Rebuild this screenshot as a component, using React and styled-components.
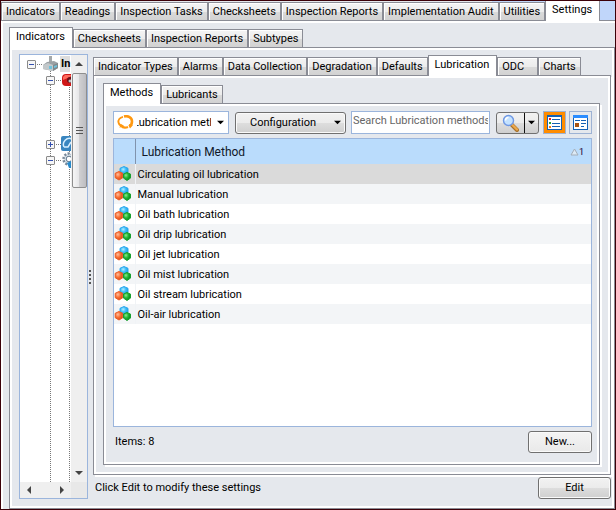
import React, { useState } from 'react';
import styled, { createGlobalStyle, css } from 'styled-components';

const GlobalStyle = createGlobalStyle`
  * {
    box-sizing: border-box;
  }
  body {
    margin: 0;
    font-family: Tahoma, Roboto, sans-serif;
    font-size: 11px;
    line-height: 16px;
    color: #000;
  }
  button, input, select {
    font: inherit;
    color: inherit;
    margin: 0;
  }
  svg {
    flex: none;
  }
`;

const Window = styled.div`
  display: flex;
  flex-direction: column;
  height: 100vh;
  background: #e5e8ed;
  border: 1px solid #3b0008;
  overflow: hidden;
`;

const TabStrip = styled.div`
  display: flex;
  align-items: flex-end;
  flex: none;
  height: ${(p) => (p.$main ? 19 : 21)}px;
  background: ${(p) => (p.$main ? 'linear-gradient(90deg, #e5e8ed 80%, #c0d6fa 80%)' : 'none')};
`;

const TabButton = styled.button`
  flex: none;
  height: 18px;
  min-width: 41px;
  padding: 0 4px;
  line-height: 16px;
  text-align: left;
  white-space: nowrap;
  border: 1px solid #8a8c95;
  border-bottom: none;
  background: linear-gradient(#f4f4f4 0%, #ececec 50%, #dadada 52%, #d2d2d2 100%);
  box-shadow: inset 1px 1px #fff;
  ${(p) => p.$active && css`
    height: 21px;
    margin-bottom: -1px;
    padding: 0 7px 3px 6px;
    background: #fff;
    position: relative;
  `}
`;

const Pane = styled.div`
  display: flex;
  flex: 1;
  flex-direction: ${(p) => (p.$row ? 'row' : 'column')};
  min-width: 0;
  min-height: 0;
  border: 1px solid #8a8c95;
  box-shadow: inset 0 0 0 2px #fff, 2px 2px #fff;
  padding: ${(p) => p.$pad || '9px'};
`;

const MainPane = styled(Pane)`
  border-width: 1px 0 0;
  box-shadow: inset 0 2px #fff, inset 2px 0 #fff;
`;

const TreePanel = styled.div`
  display: flex;
  flex-direction: column;
  flex: none;
  width: 69px;
  border: 1px solid #9bb5dc;
  background: #fff;
`;

const TreeTop = styled.div`
  display: flex;
  flex: 1;
  min-height: 0;
`;

const dots = 'repeating-linear-gradient(#777 0 1px, #fff 1px 2px)';

const TreeBody = styled.div`
  flex: 1;
  min-width: 0;
  padding-top: 1px;
  overflow: hidden;
  background: ${dots} 30px 14px / 1px 100% no-repeat, ${dots} 49px 30px / 1px 100% no-repeat;
`;

const TreeRow = styled.div`
  display: flex;
  align-items: center;
  height: 16px;
  margin-bottom: ${(p) => (p.$gap ? 48 : 0)}px;
  padding-left: ${(p) => (p.$depth ? 26 : 7)}px;
  font-weight: bold;
  white-space: nowrap;
`;

const Toggle = styled.button`
  display: flex;
  flex: none;
  width: 9px;
  height: 9px;
  padding: 0;
  border: 1px solid #8a8a8a;
  border-radius: 1px;
  background: #f6f6f6;
`;

const Branch = styled.span`
  flex: none;
  width: 6px;
  height: 1px;
  background: repeating-linear-gradient(90deg, #fff 0 1px, #777 1px 2px);
`;

const TreeLabel = styled.span`
  margin-left: 1px;
  padding-left: 1px;
  background: #ddd;
`;

const ScrollBar = styled.div`
  display: flex;
  flex: none;
  align-items: center;
  background: #efefef;
  ${(p) => (p.$horizontal
    ? css`height: 16px; width: 51px; justify-content: space-between; padding: 0 6px;`
    : css`width: 16px; flex-direction: column;`)}
`;

const ScrollRow = styled.div`
  flex: none;
  background: #e8e8e8;
`;

const ScrollArrow = styled.button`
  display: flex;
  flex: none;
  align-items: center;
  justify-content: center;
  width: ${(p) => (p.$small ? 6 : 16)}px;
  height: 18px;
  padding: 0;
  border: none;
  background: none;
`;

const Thumb = styled.div`
  display: flex;
  flex: none;
  align-items: center;
  justify-content: center;
  width: 15px;
  height: 27%;
  border: 1px solid #8e8e8e;
  border-radius: 2px;
  background: linear-gradient(90deg, #f6f6f6, #e6e6e8 45%, #cfcfd1 50%, #bdbdc1);
`;

const Track = styled.div`
  flex: 1;
`;

const Splitter = styled.div`
  display: flex;
  flex: none;
  align-items: center;
  justify-content: center;
  width: 5px;
`;

const Content = styled.div`
  display: flex;
  flex: 1;
  flex-direction: column;
  min-width: 0;
`;

const Footer = styled.div`
  display: flex;
  flex: none;
  align-items: center;
  justify-content: space-between;
  margin-top: ${(p) => p.$gap}px;
  padding-left: 2px;
`;

const Button = styled.button`
  display: flex;
  align-items: center;
  justify-content: center;
  gap: 18px;
  flex: none;
  width: ${(p) => p.$width}px;
  height: 22px;
  padding: 0 4px;
  border: 1px solid #707070;
  border-radius: 3px;
  background: linear-gradient(#f2f2f2 0%, #ebebeb 50%, #dddddd 51%, #cfcfcf 100%);
  box-shadow: inset 0 0 0 1px #fafafa;
`;

const MenuButton = styled(Button)`
  justify-content: flex-end;
`;

const PlainButton = styled(Button)`
  background: linear-gradient(#f4f4f4, #e9e9e9);
`;

const Toolbar = styled.div`
  display: flex;
  flex: none;
  align-items: center;
  height: 23px;
  margin-bottom: 4px;
`;

const Combo = styled.label`
  display: flex;
  align-items: center;
  flex: none;
  width: 116px;
  height: 23px;
  margin-right: 6px;
  padding: 0 4px 0 3px;
  border: 1px solid #9bb5dc;
  background: #fff;
`;

const ComboSelect = styled.select`
  appearance: none;
  flex: none;
  width: 74px;
  height: 18px;
  margin: 0 6px 0 3px;
  padding: 0;
  border: none;
  outline: none;
  text-indent: -4px;
  background: transparent;
`;

const SearchInput = styled.input`
  flex: 1;
  min-width: 0;
  height: 23px;
  margin: 0 6px 0 5px;
  padding: 0 1px 4px;
  border: 1px solid #9bb5dc;
  background: #fff;
  outline: none;
  &::placeholder {
    color: #666;
    opacity: 1;
  }
`;

const SplitButton = styled.div`
  display: flex;
  flex: none;
  width: 43px;
  height: 22px;
  margin-right: 4px;
  border: 1px solid #707070;
  border-radius: 3px;
  background: linear-gradient(#f2f2f2 0%, #ebebeb 50%, #dddddd 51%, #cfcfcf 100%);
`;

const SplitPart = styled.button`
  display: flex;
  align-items: center;
  justify-content: center;
  width: ${(p) => (p.$arrow ? 14 : 27)}px;
  padding: 0;
  border: none;
  border-left: ${(p) => (p.$arrow ? '1px solid #111' : 'none')};
  background: none;
`;

const ViewButton = styled.button`
  display: flex;
  align-items: center;
  justify-content: center;
  flex: none;
  width: 23px;
  height: 23px;
  margin-left: ${(p) => (p.$active ? 0 : 3)}px;
  padding: 0;
  border: 1px solid #9db2d4;
  background: ${(p) => (p.$active ? '#ff8c00' : '#e5e8ed')};
`;

const TableBox = styled.div`
  flex: 1;
  min-height: 0;
  border: 1px solid #9bb5dc;
  background: #fff;
  overflow: hidden;
`;

const Table = styled.table`
  width: 100%;
  border-collapse: collapse;
  table-layout: fixed;
`;

const Th = styled.th`
  width: ${(p) => p.$width || 'auto'};
  height: 25px;
  padding: 0 7px 0 6px;
  font-size: 12px;
  font-weight: normal;
  text-align: left;
  background: #badcfc;
  border-left: ${(p) => (p.$line ? '1px solid #8093ad' : 'none')};
`;

const HeadCell = styled.div`
  display: flex;
  align-items: center;
  justify-content: space-between;
  color: #101828;
`;

const SortMark = styled.span`
  display: flex;
  align-items: center;
  font-size: 9px;
  color: #203;
`;

const Tr = styled.tr`
  height: 20px;
  background: ${(p) => (p.$selected ? '#dadada' : '#fff')};
  &:nth-child(even) {
    background: ${(p) => (p.$selected ? '#dadada' : '#f3f5f7')};
  }
`;

const Td = styled.td`
  height: 20px;
  padding: ${(p) => (p.$icon ? '0' : '1px 0 0 2px')};
  border-left: ${(p) => (p.$icon ? 'none' : '1px solid #f0f3f6')};
  svg {
    display: block;
  }
`;

const Arrow = ({ dir = 'down', size = 7 }) => {
  const turn = { down: 0, left: 90, up: 180, right: 270 }[dir];
  return (
    <svg width={size} height={size} viewBox="0 0 8 8">
      <path d="M0 2h8L4 6z" fill={size === 7 ? '#000' : '#444'} transform={`rotate(${turn} 4 4)`} />
    </svg>
  );
};

const BallsIcon = () => (
  <svg width="18" height="16" viewBox="0 0 18 16">
    <defs>
      <radialGradient id="blue" cx=".4" cy=".35" r=".65">
        <stop offset="0" stopColor="#b4ecff" />
        <stop offset=".5" stopColor="#3cc0fa" />
        <stop offset="1" stopColor="#1e98e0" />
      </radialGradient>
      <radialGradient id="orange" cx=".35" cy=".35" r=".65">
        <stop offset="0" stopColor="#ffc0a0" />
        <stop offset=".5" stopColor="#fa7238" />
        <stop offset="1" stopColor="#dc4c18" />
      </radialGradient>
      <radialGradient id="green" cx=".35" cy=".35" r=".65">
        <stop offset="0" stopColor="#90e890" />
        <stop offset=".5" stopColor="#24b838" />
        <stop offset="1" stopColor="#0c8c20" />
      </radialGradient>
    </defs>
    <path d="M10 .5l4 1.800v4.400L10 9 6 6.700V2.300z" fill="url(#blue)" stroke="#2ba6ec" strokeLinejoin="round" />
    <path d="M5 5.500l3.800 1.800v4.400L5 14l-3.800-2.300V7.300z" fill="url(#orange)" stroke="#ea5c28" strokeLinejoin="round" />
    <path d="M13 6.500l3.500 1.600v4L13 14.500l-3.500-2.400v-4z" fill="url(#green)" stroke="#16a02c" strokeLinejoin="round" />
  </svg>
);

const RingIcon = () => (
  <svg width="17" height="15" viewBox="0 0 17 15" fill="none" stroke="#ff9810">
    <path d="M6 1.800C2.500 2.500 1 5 1.500 7.500c.3 1.500 1.500 3 3.500 3.500" strokeWidth="1.800" />
    <path d="M7 1.500c4-1 8 1 8 5 0 2.500-1 4-3 5" strokeWidth="2.600" />
    <path d="M4 10.500c1.500 2 4.500 2.500 7 1.500" strokeWidth="2.400" />
    <path d="M2.500 12.800l1-4 3.500 2z" fill="#ff9810" stroke="none" />
    <path d="M12 9l4 1-3 3.500z" fill="#ff9810" stroke="none" />
  </svg>
);

const SearchIcon = () => (
  <svg width="17" height="18" viewBox="0 0 17 18">
    <path d="M9 10l6 6" stroke="#a8722c" strokeWidth="4" strokeLinecap="round" />
    <path d="M9 9.500l6 6" stroke="#eda94c" strokeWidth="2.400" strokeLinecap="round" />
    <circle cx="6.500" cy="6.500" r="5" fill="#c4e2ff" stroke="#6f98e4" strokeWidth="1.400" />
    <path d="M3.500 6.500a3 3 0 0 1 3-3" stroke="#fff" strokeWidth="1.500" fill="none" />
  </svg>
);

const ListIcon = () => (
  <svg width="15" height="15" viewBox="0 0 15 15">
    <path d="M0 0h15v15H0z" fill="#1460b4" />
    <path d="M1 2h13v12H1z" fill="#fff" />
    <path d="M2 3h2v2H2z" fill="#e02020" />
    <path d="M2 7h2v2H2z" fill="#28a035" />
    <path d="M2 11h2v2H2z" fill="#f47a10" />
    <path d="M5 4h8M5 8h8M5 11h8" stroke="#1460b4" transform="translate(0 .5)" />
  </svg>
);

const CardIcon = () => (
  <svg width="15" height="15" viewBox="0 0 15 15">
    <path d="M0 0h15v15H0z" fill="#1460b4" />
    <path d="M1 3h13v11H1z" fill="#fff" />
    <path d="M0 0h15v3H0z" fill="#2a8cff" />
    <path d="M2 8h4v4H2z" fill="#a85210" />
    <path d="M2 5.500h5M8 5.500h5M8 8.500h5M8 11.500h3" stroke="#1460b4" />
  </svg>
);

const PlantIcon = () => (
  <svg width="17" height="16" viewBox="0 0 17 16">
    <path d="M7 0h3v7H7z" fill="#a4a8aa" />
    <path d="M1 9l4-3 7-1 4 2v5l-5 3-10-2z" fill="#9ba1a4" />
    <path d="M1 9l5-2 5 2v6L1 13z" fill="#c3c8ca" />
    <path d="M11 9l5-2v5l-5 3z" fill="#82898c" />
    <path d="M7 10h3v3H7zM12 10l3-1v2l-3 1z" fill="#6fc2dc" />
  </svg>
);

const RedIcon = () => (
  <svg width="16" height="16" viewBox="0 0 16 16">
    <rect x="1" y="2" width="18" height="12" rx="4" fill="#cf1717" />
    <path d="M4 3h8L9 5 2 8V5z" fill="#ff6a5c" />
    <circle cx="9" cy="8" r="3" fill="#681018" />
    <circle cx="9" cy="9" r="1.500" fill="#c3c3c3" />
  </svg>
);

const GaugeIcon = () => (
  <svg width="16" height="16" viewBox="0 0 16 16">
    <rect width="20" height="15" rx="2" fill="#3986c0" />
    <path d="M3 11a6 6 0 0 1 8-8M3 11h4l3-5" stroke="#d8efff" strokeWidth="1.500" fill="none" />
  </svg>
);

const GearIcon = () => (
  <svg width="16" height="16" viewBox="0 0 16 16">
    <circle cx="8" cy="7" r="5.500" fill="#d9e3ea" stroke="#78899a" strokeWidth="2.500" strokeDasharray="2 1.400" />
    <circle cx="8" cy="7" r="2.800" fill="#fff" stroke="#61788d" />
    <path d="M6 11l4-2v7H8z" fill="#278acb" />
  </svg>
);

const GripIcon = () => (
  <svg width="3" height="14" viewBox="0 0 3 14">
    <path d="M0 0h2v2H0zM0 4h2v2H0zM0 8h2v2H0zM0 12h2v2H0z" fill="#555" />
  </svg>
);

const Tabs = ({ items, initial, main }) => {
  const [active, setActive] = useState(initial);
  return (
    <TabStrip $main={main} role="tablist">
      {items.map((item) => (
        <TabButton
          key={item}
          role="tab"
          aria-selected={item === active}
          $active={item === active}
          onClick={() => setActive(item)}
        >
          {item}
        </TabButton>
      ))}
    </TabStrip>
  );
};

const TreeNode = ({ depth, open, gap, icon, label }) => (
  <TreeRow $depth={depth} $gap={gap}>
    <Toggle aria-label={open ? 'Collapse' : 'Expand'}>
      <svg width="7" height="7" viewBox="0 0 7 7">
        <path d={open ? 'M1 3h5v1H1z' : 'M1 3h5v1H1zM3 1h1v5H3z'} fill="#3450b0" />
      </svg>
    </Toggle>
    <Branch />
    {icon}
    {label && <TreeLabel>{label}</TreeLabel>}
  </TreeRow>
);

const Tree = () => (
  <TreePanel>
    <TreeTop>
      <TreeBody>
        <TreeNode open icon={<PlantIcon />} label="In" />
        <TreeNode depth={1} open gap icon={<RedIcon />} />
        <TreeNode depth={1} icon={<GaugeIcon />} />
        <TreeNode depth={1} open icon={<GearIcon />} />
      </TreeBody>
      <ScrollBar>
        <ScrollArrow aria-label="Scroll up"><Arrow dir="up" size={8} /></ScrollArrow>
        <Thumb>
          <svg width="7" height="8" viewBox="0 0 7 8">
            <path d="M0 .5h7M0 3.500h7M0 6.500h7" stroke="#555" />
          </svg>
        </Thumb>
        <Track />
        <ScrollArrow aria-label="Scroll down"><Arrow size={8} /></ScrollArrow>
      </ScrollBar>
    </TreeTop>
    <ScrollRow>
      <ScrollBar $horizontal>
        <ScrollArrow $small aria-label="Scroll left"><Arrow dir="left" size={8} /></ScrollArrow>
        <ScrollArrow $small aria-label="Scroll right"><Arrow dir="right" size={8} /></ScrollArrow>
      </ScrollBar>
    </ScrollRow>
  </TreePanel>
);

const methods = [
  'Circulating oil lubrication',
  'Manual lubrication',
  'Oil bath lubrication',
  'Oil drip lubrication',
  'Oil jet lubrication',
  'Oil mist lubrication',
  'Oil stream lubrication',
  'Oil-air lubrication',
];

const MethodsTable = () => {
  const [selected, setSelected] = useState(methods[0]);
  return (
    <TableBox>
      <Table>
        <thead>
          <tr>
            <Th $width="21px" />
            <Th $line>
              <HeadCell>
                Lubrication Method
                <SortMark>
                  <svg width="9" height="8" viewBox="0 0 9 8">
                    <path d="M4.500 1L8 7H1z" fill="#dceaf6" stroke="#a5aeb8" />
                  </svg>
                  1
                </SortMark>
              </HeadCell>
            </Th>
          </tr>
        </thead>
        <tbody>
          {methods.map((name) => (
            <Tr key={name} $selected={name === selected} onClick={() => setSelected(name)}>
              <Td $icon><BallsIcon /></Td>
              <Td>{name}</Td>
            </Tr>
          ))}
        </tbody>
      </Table>
    </TableBox>
  );
};

const App = () => {
  const [search, setSearch] = useState('');

  return (
    <Window>
      <GlobalStyle />
      <Tabs
        main
        initial="Settings"
        items={['Indicators', 'Readings', 'Inspection Tasks', 'Checksheets', 'Inspection Reports', 'Implementation Audit', 'Utilities', 'Settings']}
      />
      <MainPane $pad="5px 0 0 8px">
        <Tabs initial="Indicators" items={['Indicators', 'Checksheets', 'Inspection Reports', 'Subtypes']} />
        <Pane $row $pad="6px 3px 9px 9px">
          <Tree />
          <Splitter><GripIcon /></Splitter>
          <Content>
            <Tabs
              initial="Lubrication"
              items={['Indicator Types', 'Alarms', 'Data Collection', 'Degradation', 'Defaults', 'Lubrication', 'ODC', 'Charts']}
            />
            <Pane $pad="6px 10px 9px 9px">
              <Tabs initial="Methods" items={['Methods', 'Lubricants']} />
              <Pane $pad="7px 7px 11px 9px">
                <Toolbar>
                  <Combo>
                    <RingIcon />
                    <ComboSelect aria-label="Object type">
                      <option>Lubrication methods</option>
                    </ComboSelect>
                    <Arrow />
                  </Combo>
                  <MenuButton $width={111}>
                    Configuration
                    <Arrow />
                  </MenuButton>
                  <SearchInput
                    type="text"
                    aria-label="Search"
                    placeholder="Search Lubrication methods"
                    value={search}
                    onChange={(e) => setSearch(e.target.value)}
                  />
                  <SplitButton>
                    <SplitPart aria-label="Search"><SearchIcon /></SplitPart>
                    <SplitPart $arrow aria-label="Search options"><Arrow /></SplitPart>
                  </SplitButton>
                  <ViewButton $active aria-label="List view"><ListIcon /></ViewButton>
                  <ViewButton aria-label="Card view"><CardIcon /></ViewButton>
                </Toolbar>
                <MethodsTable />
                <Footer $gap={4}>
                  <span>Items: 8</span>
                  <PlainButton $width={64}>New...</PlainButton>
                </Footer>
              </Pane>
            </Pane>
            <Footer $gap={2}>
              <span>Click Edit to modify these settings</span>
              <Button $width={73}>Edit</Button>
            </Footer>
          </Content>
        </Pane>
      </MainPane>
    </Window>
  );
};

export default App;
